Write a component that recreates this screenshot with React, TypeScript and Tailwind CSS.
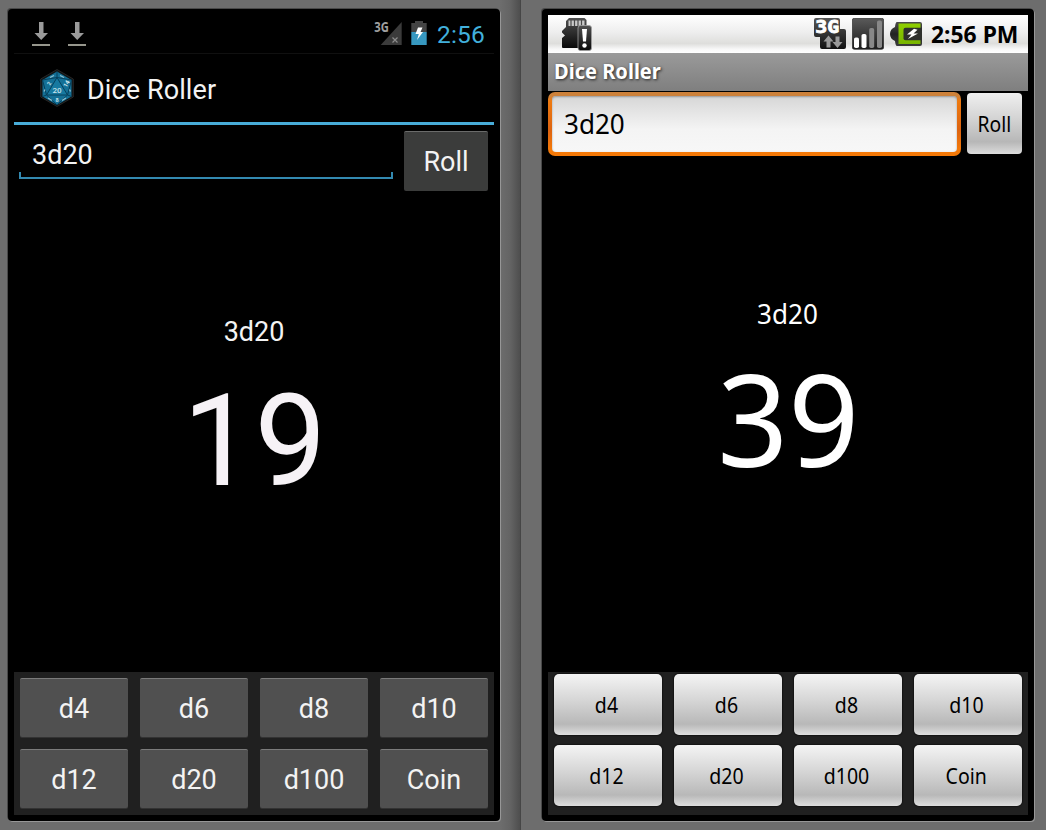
import type { ReactNode } from "react";

const DICE = ["d4", "d6", "d8", "d10", "d12", "d20", "d100", "Coin"];

function DownloadIcon() {
  return (
    <svg width="18" height="24" viewBox="0 0 18 24" className="block">
      <path d="M7 0h4.500v11h4.500L9.200 18 2.500 11H7z" fill="#9a9a9a" />
      <rect x="0" y="22" width="18" height="2" fill="#96968c" />
    </svg>
  );
}

function HoloSignalIcon() {
  return (
    <svg width="30" height="30" viewBox="-2 -6 30 30" className="-mt-[6px] block">
      <path d="M27.700 0v23H6.700z" fill="#3b3b3b" />
      <text x="0.300" y="10.300" fontSize="13.500" fontWeight="700" fontFamily="Open Sans, sans-serif" fill="#a0a0a0" textLength="14.500" lengthAdjust="spacingAndGlyphs">
        3G
      </text>
      <path d="M18.500 15.500l5 5m0-5l-5 5" stroke="#8c8c8c" strokeWidth="1.200" />
    </svg>
  );
}

function HoloBatteryIcon() {
  return (
    <svg width="16" height="24" viewBox="0 0 16 24" className="block">
      <path d="M4 0h8v2h3.700v9H.3V2H4z" fill="#444" />
      <rect x=".3" y="11" width="15.400" height="13" fill="#3798c0" />
      <path d="M7 6.500h4.500L9.500 11H12l-6 8 1.800-6H4.500z" fill="#fff" />
    </svg>
  );
}

function DieIcon() {
  return (
    <svg width="34" height="38" viewBox="0 0 34 38" className="block">
      <path d="M17 .5L33.300 10v18L17 37.500.7 28V10z" fill="#101314" stroke="#3a3a3a" strokeWidth=".6" />
      <path d="M17 2.500L31.500 11v16.500L17 36 2.500 27.500V11z" fill="#147096" />
      <path d="M17 8.500L27.500 26h-21z" fill="#1779a0" />
      <path
        d="M17 2.500V8.500M2.500 11L17 8.500 31.500 11 27.500 26l4 1.500M2.500 11l4 15-4 1.500M6.500 26h21L17 36zM17 8.500L6.500 26M17 8.500L27.500 26"
        fill="none"
        stroke="#06405c"
        strokeWidth="1"
      />
      <g fontFamily="Roboto, sans-serif" fill="#c8e2ea" textAnchor="middle">
        <text x="17" y="23.500" fontSize="8" fontWeight="500">20</text>
        <text x="17" y="32.500" fontSize="5.500" fontWeight="700">8</text>
        <text x="9" y="16.500" fontSize="5.500" fontWeight="700" transform="rotate(-60 9 14.500)">2</text>
        <text x="26" y="17" fontSize="6" fontWeight="700" transform="rotate(-60 26 14.500)">14</text>
      </g>
      <path d="M10 8.500l4-2M20 6.500l4 2M5 20.500l-1 2M29.500 20.500l1 2M8 29l4 2.500M26 29l-4 2.500" stroke="#8fbfce" strokeWidth="1.300" />
    </svg>
  );
}

function SdAlertIcon() {
  return (
    <svg width="30" height="33" viewBox="0 0 30 33" className="block">
      <defs>
        <linearGradient id="sd" x1="0" y1="0" x2="0" y2="1">
          <stop offset="0" stopColor="#505050" />
          <stop offset="1" stopColor="#080808" />
        </linearGradient>
      </defs>
      <path d="M7 0h15.500L24.500 2v28H1q-1 0-1-1V20l3-2.500L0 14.500V13l4-4V3z" fill="url(#sd)" />
      <path d="M6.500 2.500h16V8h-16z" fill="#c9c9c9" />
      <path d="M9 2v6M12.500 2v6M16 2v6M19.500 2v6" stroke="#484848" strokeWidth="1.200" />
      <rect x="16" y="7.500" width="13.500" height="25" rx="2.500" fill="url(#sd)" stroke="#a0a0a0" strokeWidth=".8" />
      <path d="M20 11h5l-1 12.500h-3z" fill="#fff" />
      <circle cx="22.500" cy="27.500" r="2.200" fill="#fff" />
    </svg>
  );
}

function Data3GIcon() {
  return (
    <svg width="33" height="32" viewBox="0 0 33 32" className="block">
      <defs>
        <linearGradient id="dg" x1="0" y1="0" x2="0" y2="1">
          <stop offset="0" stopColor="#555" />
          <stop offset="1" stopColor="#111" />
        </linearGradient>
      </defs>
      <path d="M2 0h22q2 0 2 2v9h4q2 0 2 2v16q0 2-2 2H8q-2 0-2-2V19H2q-2 0-2-2V2q0-2 2-2z" fill="url(#dg)" />
      <text x="1.200" y="14.800" fontSize="17" fontWeight="700" fontFamily="DejaVu Sans Mono, monospace" fill="#fff" stroke="#fff" strokeWidth=".8" textLength="24" lengthAdjust="spacingAndGlyphs">
        3G
      </text>
      <path d="M14.500 17.500l5 6h-3v6h-4v-6h-3zM23.500 30l-5-6h3v-5.500h4V24h3z" fill="#999" />
    </svg>
  );
}

function BarsIcon() {
  return (
    <svg width="32" height="32" viewBox="0 0 32 32" className="block">
      <defs>
        <linearGradient id="bg" x1="0" y1="0" x2="0" y2="1">
          <stop offset="0" stopColor="#5a5a5a" />
          <stop offset="1" stopColor="#1b1b1b" />
        </linearGradient>
      </defs>
      <rect x=".3" y=".3" width="31.400" height="31" rx="2" fill="url(#bg)" stroke="#2b2b2b" strokeWidth=".7" />
      <rect x="2" y="19.500" width="5" height="10.500" rx="1.800" fill="#fff" />
      <rect x="9.500" y="16" width="5" height="14" rx="1.800" fill="#fff" />
      <rect x="17.200" y="10" width="5" height="20" rx="1.800" fill="#888" />
      <rect x="25" y="2.500" width="5" height="27.500" rx="1.800" fill="#888" />
    </svg>
  );
}

function GreenBatteryIcon() {
  return (
    <svg width="32" height="24" viewBox="0 0 32 24" className="block">
      <defs>
        <linearGradient id="bt" x1="0" y1="0" x2="0" y2="1">
          <stop offset="0" stopColor="#4c4c4c" />
          <stop offset=".5" stopColor="#222" />
          <stop offset="1" stopColor="#3c3c3c" />
        </linearGradient>
        <linearGradient id="gr" x1="0" y1="0" x2="0" y2="1">
          <stop offset="0" stopColor="#8fd000" />
          <stop offset="1" stopColor="#78b400" />
        </linearGradient>
      </defs>
      <path d="M7 0h23q2 0 2 2v20q0 2-2 2H7q-1.500 0-2-5-5-2-5-7t5-7Q5.500 0 7 0z" fill="url(#bt)" />
      <rect x="8.500" y="1.500" width="22" height="20.500" fill="url(#gr)" />
      <path d="M32 5.800H15.500q-2 0-2 2v8.500q0 2 2 2H32z" fill="#2e302c" />
      <path d="M24 6.800l-7 5.700h4.500L18 17l10-5.500h-4.500l4-3.700z" fill="#fff" />
    </svg>
  );
}

function Device({ children }: { children: ReactNode }) {
  return (
    <div className="h-[812px] w-[492px] rounded-[4px] bg-black p-[6px] shadow-[1px_1px_0_#979797,-1px_-1px_0_#484848]">
      <div className="flex h-[800px] w-[480px] flex-col">{children}</div>
    </div>
  );
}

function HoloDevice() {
  return (
    <Device>
      <div className="flex h-[39px] shrink-0 items-start border-b border-[#101010] pl-[18px] pr-[10px] pt-[7px] font-[Roboto,sans-serif]">
        <DownloadIcon />
        <div className="w-[18px]" />
        <DownloadIcon />
        <div className="grow" />
        <HoloSignalIcon />
        <div className="w-[9px]" />
        <div className="-mt-px">
          <HoloBatteryIcon />
        </div>
        <div className="ml-[10px] w-[47px] text-[24.500px] leading-[26px] tracking-[0.2px] text-[#42b0dc]">2:56</div>
      </div>
      <div className="flex h-[71px] shrink-0 items-start border-b-[3px] border-[#48acd8] pl-[26px] pt-[15px]">
        <DieIcon />
        <div className="ml-[13px] mt-[5px] font-[Roboto,sans-serif] text-[27px] leading-[32px] tracking-[0.1px] text-[#f3f3f3]">Dice Roller</div>
      </div>
      <div className="flex h-[66px] shrink-0 pl-[5px] pt-[6px]">
        <div className="flex h-[48px] w-[374px] flex-col justify-between">
          <div className="pl-[13px] pt-[8px] font-[Roboto,sans-serif] text-[27px] leading-[32px] text-[#f3f3f3]">3d20</div>
          <div className="-mt-[10px] h-[7px] shrink-0 border-x-2 border-b-2 border-[#3389b0]" />
        </div>
        <button className="ml-[11px] h-[60px] w-[84px] rounded-[2px] border-t border-[#6a6b6a] bg-[#3b3c3b] pt-px font-[Roboto,sans-serif] text-[27px] leading-[32px] text-[#f3f3f3]">
          Roll
        </button>
      </div>
      <div className="flex grow flex-col items-center pt-[125px] font-[Roboto,sans-serif]">
        <div className="text-[27px] leading-[32px] text-[#f3f3f3]">3d20</div>
        <div className="mt-[28px] pl-px text-[128px] leading-[130px] text-[#f6f2f6]">19</div>
      </div>
      <div className="grid h-[143px] shrink-0 grid-cols-4 grid-rows-[59px_59px] gap-[12px] bg-[#202020] px-[6px] pt-[6px]">
        {DICE.map((d) => (
          <button
            key={d}
            className="rounded-[2px] border-t border-[#7b7b7b] bg-[#505050] pt-[2px] font-[Roboto,sans-serif] text-[27px] leading-[32px] text-[#f3f3f3] shadow-[0_1px_0_#333]"
          >
            {d}
          </button>
        ))}
      </div>
    </Device>
  );
}

function ClassicDevice() {
  return (
    <Device>
      <div className="flex h-[38px] shrink-0 items-start bg-[linear-gradient(#ffffff,#eeeeee_45%,#dededc_75%,#f8f8f8_90%,#ffffff)] pl-[14px] pt-[3px]">
        <SdAlertIcon />
        <div className="grow" />
        <Data3GIcon />
        <div className="w-[5px]" />
        <BarsIcon />
        <div className="ml-[6px] mt-[4px]">
          <GreenBatteryIcon />
        </div>
        <div className="ml-[9px] mt-[2px] w-[97px] whitespace-nowrap font-['Noto_Sans',sans-serif] text-[23px] font-bold leading-[28px] text-black">
          <span className="inline-block origin-left scale-x-[0.995]">2:56 PM</span>
        </div>
      </div>
      <div className="h-[38px] shrink-0 bg-linear-to-b from-[#9a9a9a] to-[#7f7f7f] pl-[6px] pt-[4px] font-['Noto_Sans',sans-serif] text-[21px] font-bold leading-[28px] text-white">
        <span className="inline-block origin-left scale-x-[0.955] [text-shadow:1px_1px_3px_#222]">Dice Roller</span>
      </div>
      <div className="flex h-[66px] shrink-0 pt-[1px]">
        <div className="h-[64px] w-[413px] rounded-[7px] bg-[linear-gradient(#cd813a_0,#cd813a_4px,#ee7a10_9px,#dd6411_38px,#f47908_58px,#f47908)] p-[4px]">
          <div className="h-full rounded-[4px] bg-[linear-gradient(#d6d6d6,#e8e8e8_35%,#f4f4f4_60%,#f7f7f7)] pl-[12px] pt-[12px] font-['Noto_Sans',sans-serif] text-[27px] leading-[32px] text-black shadow-[inset_0_1px_2px_#999]">
            <span className="inline-block origin-left scale-x-[0.965]">3d20</span>
          </div>
        </div>
        <button className="ml-[6px] mt-[1px] h-[61px] w-[55px] rounded-[4px] bg-[linear-gradient(#efefef,#d5d5d5_40%,#b7b7b7_80%,#dcdcdc)] pt-[2px] font-['Noto_Sans',sans-serif] text-[21px] text-black">
          <span className="inline-block scale-x-[0.92]">Roll</span>
        </button>
      </div>
      <div className="flex grow flex-col items-center pt-[141px] font-['Noto_Sans',sans-serif] text-white">
        <div className="scale-x-[0.965] pr-px text-[27px] leading-[32px]">3d20</div>
        <div className="mt-[23px] scale-x-[0.97] text-[128px] leading-[130px]">39</div>
      </div>
      <div className="grid h-[143px] shrink-0 grid-cols-4 grid-rows-[61px_61px] gap-x-[12px] gap-y-[10px] bg-[#202020] px-[6px] pt-[2px]">
        {DICE.map((d) => (
          <button
            key={d}
            className="rounded-[5px] bg-[linear-gradient(#f4f4f4,#d8d8d8_40%,#b8b8b8_82%,#dedede)] pr-[3px] pt-px font-['Noto_Sans',sans-serif] text-[21px] leading-[28px] text-black shadow-[0_0_1px_1px_#141414]"
          >
            <span className="inline-block scale-x-[0.93]">{d}</span>
          </button>
        ))}
      </div>
    </Device>
  );
}

export default function App() {
  return (
    <main className="flex h-[830px] w-[1046px] overflow-hidden bg-[#6d6d6d]">
      <section className="h-full w-[521px] border-r border-[#464646] bg-[linear-gradient(to_right,#6d6d6d_500px,#646464_510px,#4e4e4e)] pl-[8px] pt-[9px]">
        <HoloDevice />
      </section>
      <section className="h-full w-[525px] pl-[21px] pt-[9px]">
        <ClassicDevice />
      </section>
    </main>
  );
}
